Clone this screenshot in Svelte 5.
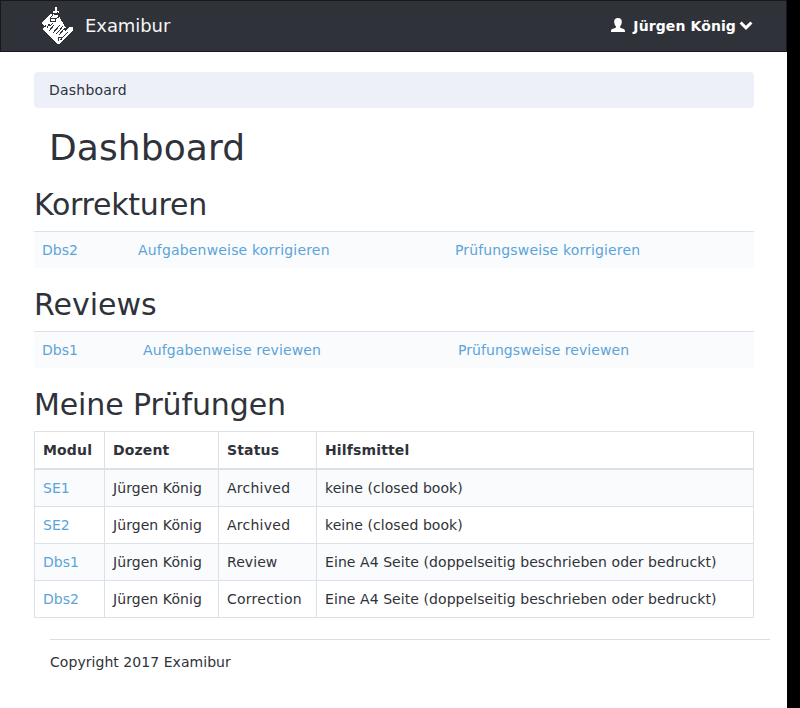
<script>
  const tasks = [
    { title: 'Korrekturen', module: 'Dbs2', verb: 'korrigieren', cols: [96, 317, 307], track: [-0.25, 0.18, 0.14] },
    { title: 'Reviews', module: 'Dbs1', verb: 'reviewen', cols: [101, 315, 304], track: [0, 0.12, 0.06] }
  ];
  const exams = [
    ['SE1', 'Archived', 'keine (closed book)'],
    ['SE2', 'Archived', 'keine (closed book)'],
    ['Dbs1', 'Review', 'Eine A4 Seite (doppelseitig beschrieben oder bedruckt)'],
    ['Dbs2', 'Correction', 'Eine A4 Seite (doppelseitig beschrieben oder bedruckt)']
  ];
</script>

<div class="page">
  <nav>
    <a class="brand" href="#home">
      <svg class="logo" width="32" height="38" viewBox="0 0 32 38" shape-rendering="crispEdges">
        <path fill="#fff" d="M8 7L2 14L0 15v2l2 1v2l-1 3L16 37h2l3-4 7-6 3-4v-3h-4l-4 4-1-2 2-1L16 8z" />
        <path fill="#fff" d="M13 0h2v4h2v2h-6V4h2z" />
        <path fill="none" stroke="#2f3239" d="M10.500 5v3.500l-2 2v4h5v-3l3-1v-3l-1-2M9 11.500h4" />
        <path fill="none" stroke="#2f3239" d="M1 19.500h2.500v-2M5 21l2-4 1 2 3-3M7 24l5-6M11 26l7-8M14 27l3-3 4-5M17 28l6-7M16.500 34v-3.500h3v2h-2M20 31l6-6" />
      </svg>
      <span>Examibur</span>
    </a>
    <a class="user" href="#user">
      <svg class="person" width="14" height="14" viewBox="0 0 14 14"><path fill="#fff" d="M7 0C4.400 0 3.200 1.200 3.200 3.500c0 2 .5 3.700 1.800 5v1C3.500 10.600 0 10.500 0 13v1h14v-1c0-2.500-3.500-2.400-5-3.500v-1c1.300-1.300 1.800-3 1.800-5C10.800 1.200 9.600 0 7 0z" /></svg>
      <span>Jürgen König</span>
      <svg class="chev" width="14" height="14" viewBox="0 0 14 14"><path fill="none" stroke="#fff" stroke-width="3" d="M1.600 3.500L7 8.900l5.400-5.400" /></svg>
    </a>
  </nav>

  <main>
    <div class="breadcrumb">Dashboard</div>
    <h1>Dashboard</h1>
    {#each tasks as t}
      <h2 style="letter-spacing: {t.track[0]}px">{t.title}</h2>
      <table class="plain">
        <colgroup>{#each t.cols as w}<col style="width: {w}px" />{/each}</colgroup>
        <tbody>
          <tr>
            <td><a href="#exam">{t.module}</a></td>
            <td style="letter-spacing: {t.track[1]}px"><a href="#exercise">Aufgabenweise {t.verb}</a></td>
            <td style="letter-spacing: {t.track[2]}px"><a href="#participant">Prüfungsweise {t.verb}</a></td>
          </tr>
        </tbody>
      </table>
    {/each}
    <h2 class="exams">Meine Prüfungen</h2>
    <table class="bordered">
      <colgroup><col class="c1" /><col class="c2" /><col class="c3" /><col /></colgroup>
      <thead>
        <tr><th>Modul</th><th>Dozent</th><th>Status</th><th>Hilfsmittel</th></tr>
      </thead>
      <tbody>
        {#each exams as [name, status, aids]}
          <tr><td><a href="#exam">{name}</a></td><td>Jürgen König</td><td class:status={status !== 'Review'}>{status}</td><td>{aids}</td></tr>
        {/each}
      </tbody>
    </table>
  </main>
  <footer>Copyright 2017 Examibur</footer>
</div>

<style>
  :global(body) { margin: 0; background: #000; }
  .page {
    width: 787px;
    height: 708px;
    overflow: hidden;
    background: #fff;
    color: #2f3239;
    font: 14px/20px "DejaVu Sans", sans-serif;
  }
  a { color: #5ba4d9; text-decoration: none; }
  nav {
    box-sizing: border-box;
    height: 52px;
    border: 1px solid #17171c;
    background: #2f3239;
    display: flex;
    justify-content: space-between;
    padding: 0 33px 0 41px;
  }
  .brand { display: flex; color: #f5f5f5; font-size: 18px; line-height: 50px; }
  .brand span { margin-left: 11px; letter-spacing: -0.07px; }
  .logo { margin-top: 6px; }
  .user { display: flex; align-items: center; color: #fff; font-weight: 700; }
  .user span { margin: 0 3px 0 8px; letter-spacing: 0.1px; }
  .person { margin-top: -2px; }
  main { width: 720px; margin: 20px 0 0 34px; }
  .breadcrumb { padding: 8px 15px; border-radius: 4px; background: #edf0f9; letter-spacing: 0.22px; }
  h1, h2 { font-weight: 400; line-height: 1.1; }
  h1 { font-size: 36px; margin: 20px 0 20px 15px; letter-spacing: 0.1px; }
  h2 { font-size: 30px; margin: 20px 0 10px; }
  .exams { letter-spacing: -0.12px; }
  table { width: 720px; table-layout: fixed; border-collapse: collapse; margin-bottom: 20px; }
  td, th { padding: 8px; text-align: left; border-top: 1px solid #dbe1e8; }
  tbody tr:nth-child(odd) { background: #fafbfd; }
  .bordered td, .bordered th { border: 1px solid #dbe1e8; }
  .bordered th { border-bottom-width: 2px; letter-spacing: 0.15px; }
  .bordered td + td { letter-spacing: 0.07px; }
  .bordered td.status { letter-spacing: 0.25px; }
  .c1 { width: 70px; }
  .c2 { width: 114px; }
  .c3 { width: 98px; }
  footer { width: 720px; margin: 21px 0 0 50px; border-top: 1px solid #dcdde1; padding-top: 12px; letter-spacing: 0.05px; }
</style>
